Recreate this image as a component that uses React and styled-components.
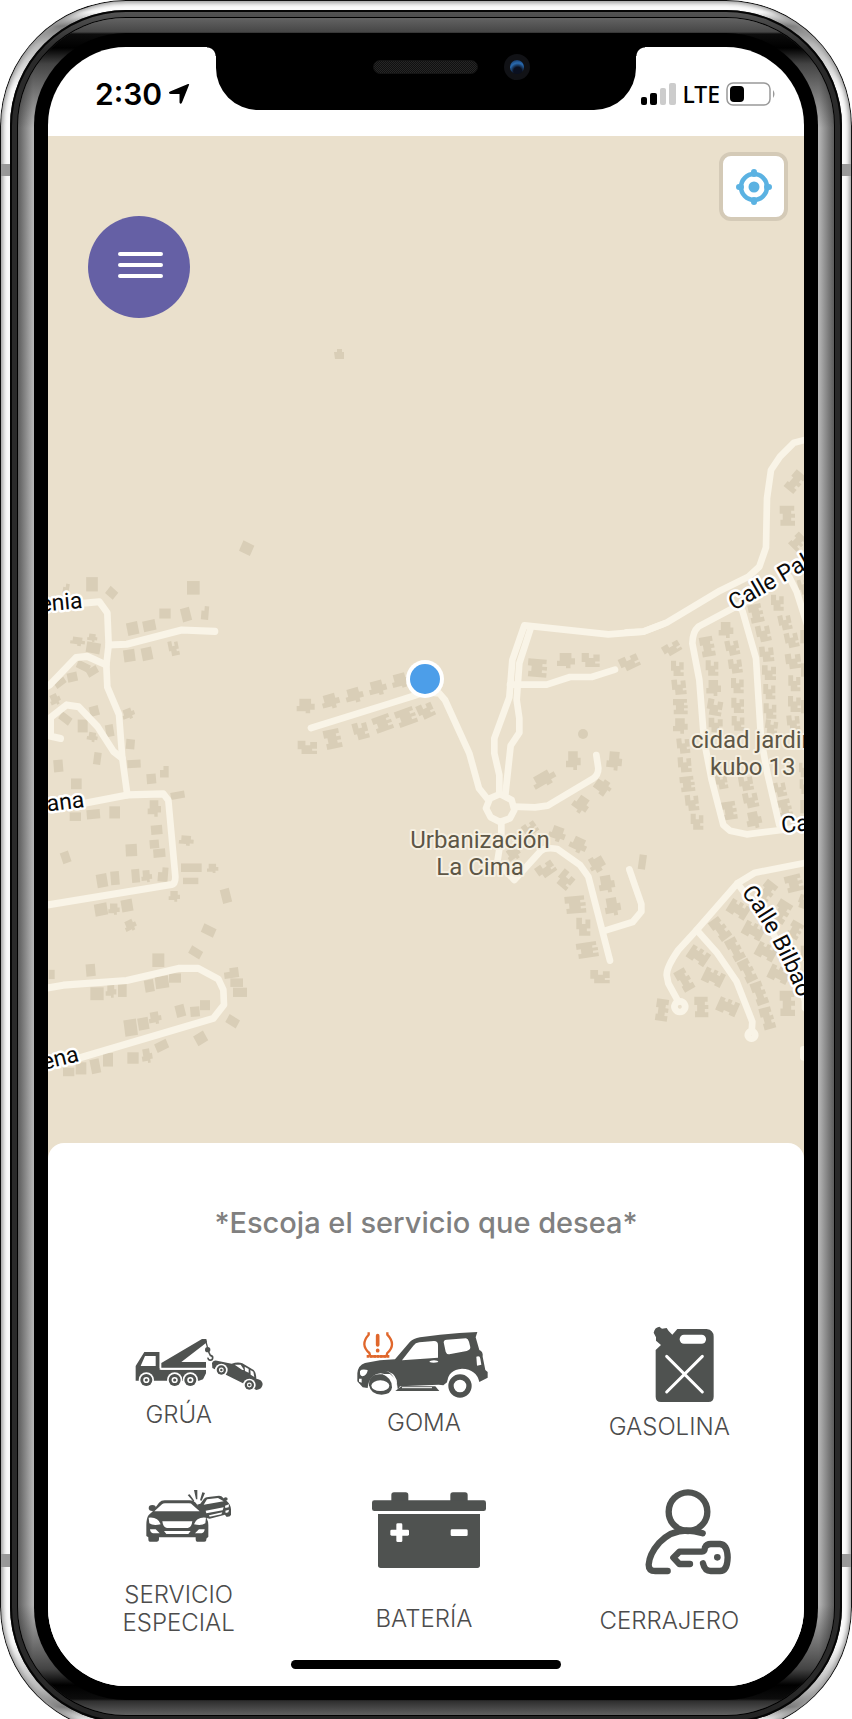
import React from "react";
import styled, { createGlobalStyle, css } from "styled-components";

const INK = "#4f5250";
const BLUE = "#5bb2e2";

const GlobalStyle = createGlobalStyle`
  * { box-sizing: border-box; }
  html, body { margin: 0; background: #fff; }
  body { font-family: Inter, "Liberation Sans", sans-serif; }
  button { font: inherit; color: inherit; border: 0; padding: 0; background: none; cursor: pointer; }
`;

/* ---------- device shell ---------- */

const Page = styled.div`
  min-height: 100vh;
  display: flex;
  flex-direction: column;
  overflow: clip;
`;

const SteelRing = styled.div`
  flex: 1;
  display: flex;
  margin-bottom: -14px;
  padding: 10px;
  border-radius: 126px;
  background:
    linear-gradient(
      to bottom,
      transparent 164px, #989898 164px, #989898 176px, transparent 176px,
      transparent calc(100% - 179px), #989898 calc(100% - 179px),
      #989898 calc(100% - 166px), transparent calc(100% - 166px)
    ),
    linear-gradient(
      to bottom,
      transparent 12px, rgba(40, 40, 40, 0.6) 26px, rgba(120, 120, 120, 0.5) 44px, transparent 90px,
      transparent calc(100% - 90px), rgba(120, 120, 120, 0.5) calc(100% - 44px),
      rgba(40, 40, 40, 0.6) calc(100% - 26px), transparent calc(100% - 12px)
    ),
    #fafafa;
  box-shadow: inset 0 0 0 1px #111, inset 0 0 4px 3px #9a9a9a;
`;

const DarkRing = styled.div`
  flex: 1;
  display: flex;
  padding: 8px;
  border-radius: 116px;
  background: linear-gradient(to bottom, #555 0, #2a2a2a 40px, #2a2a2a calc(100% - 40px), #222 100%);
  box-shadow: inset 0 0 0 2px #050505;
`;

const RimRing = styled.div`
  flex: 1;
  display: flex;
  padding: 15px 16px;
  border-radius: 108px;
  background:
    linear-gradient(
      to bottom,
      #636363 0, #464646 14px, #0c0c0c 16px, #000 30px, rgba(20, 20, 20, 0.7) 46px, transparent 110px,
      transparent calc(100% - 110px), rgba(20, 20, 20, 0.7) calc(100% - 46px), #000 calc(100% - 30px),
      #0c0c0c calc(100% - 16px), #2e2e2e calc(100% - 14px), #606060 100%
    ),
    linear-gradient(to right, #5c5c5c 0, #b4b4b4 15px, #b4b4b4 calc(100% - 15px), #5c5c5c 100%);
  box-shadow: 0 0 0 1px #000;
`;

const BlackRing = styled.div`
  flex: 1;
  display: flex;
  padding: 14px;
  border-radius: 92px;
  background: #000;
`;

const Screen = styled.main`
  flex: 1;
  min-width: 0;
  display: flex;
  flex-direction: column;
  border-radius: 78px;
  overflow: hidden;
  background: #fff;
`;

/* ---------- status bar ---------- */

const StatusBar = styled.header`
  display: grid;
  grid-template-columns: minmax(0, 168fr) minmax(0, 420fr) minmax(0, 168fr);
  height: 89px;
  flex: none;
`;

const StatusSide = styled.div`
  display: flex;
  align-items: center;
  justify-content: ${(p) => (p.$end ? "flex-end" : "flex-start")};
  gap: 6px;
  height: 28px;
  margin-top: 33px;
  padding: ${(p) => (p.$end ? "0 28px 0 0" : "0 0 0 47px")};
`;

const Time = styled.time`
  font-size: 30px;
  line-height: 28px;
  font-weight: 600;
  color: #000;
`;

const Network = styled.span`
  font-family: "Noto Sans", sans-serif;
  font-size: 23px;
  line-height: 28px;
  font-weight: 500;
  color: #000;
`;

const Notch = styled.div`
  position: relative;
  height: 63px;
  padding: 7px 0 0 157px;
  display: flex;
  align-items: flex-start;
  gap: 26px;
  background: #000;
  border-radius: 0 0 42px 42px;

  &::before,
  &::after {
    content: "";
    position: absolute;
    top: 0;
    width: 9px;
    height: 9px;
  }
  &::before {
    right: 100%;
    background: radial-gradient(circle at 0 100%, transparent 8px, #000 9px);
  }
  &::after {
    left: 100%;
    background: radial-gradient(circle at 100% 100%, transparent 8px, #000 9px);
  }
`;

const Speaker = styled.div`
  width: 105px;
  height: 14px;
  margin-top: 6px;
  border-radius: 7px;
  border: 1px solid #141414;
  background: repeating-conic-gradient(#262626 0 25%, #101010 0 50%) 0 0 / 2px 2px;
`;

const Camera = styled.div`
  width: 26px;
  height: 26px;
  border-radius: 50%;
  border: 6px solid #111216;
  background: radial-gradient(circle at 55% 80%, #0a1020 0 30%, #2a6bb0 60%, #12305a 90%);
`;

/* ---------- map ---------- */

const MapPanel = styled.section`
  position: relative;
  flex: 1;
  min-height: 500px;
  background: #eae0cc;
`;

const MapCanvas = styled.svg`
  position: absolute;
  inset: 0;
  width: 100%;
  height: 100%;
  font-family: Roboto, sans-serif;
`;

const mapButton = css`
  position: absolute;
  display: flex;
  align-items: center;
  justify-content: center;
`;

const MenuButton = styled.button`
  ${mapButton}
  top: 80px;
  left: 40px;
  width: 102px;
  height: 102px;
  border-radius: 50%;
  background: #6560a5;
`;

const LocateButton = styled.button`
  ${mapButton}
  top: 16px;
  right: 16px;
  width: 69px;
  height: 69px;
  border: 4px solid #d4cab7;
  border-radius: 12px;
  background: #fff;
`;

/* ---------- services sheet ---------- */

const Sheet = styled.section`
  position: relative;
  flex: none;
  display: flex;
  flex-direction: column;
  align-items: center;
  margin-top: -17px;
  padding: 62px 0 17px;
  border-radius: 16px 16px 0 0;
  background: #fff;
`;

const Title = styled.h1`
  margin: 0;
  font-size: 29px;
  line-height: 36px;
  font-weight: 500;
  color: #808080;
`;

const ServiceGrid = styled.ul`
  align-self: stretch;
  display: grid;
  grid-template-columns: repeat(3, minmax(0, 1fr));
  row-gap: 37px;
  margin: 77px 0 0;
  padding: 0 12px 0 8px;
  list-style: none;
`;

const ServiceItem = styled.li`
  display: flex;
  justify-content: center;
  align-items: flex-start;
`;

const ServiceButton = styled.button`
  display: flex;
  flex-direction: column;
  align-items: center;
  width: 180px;
`;

const ServiceIcon = styled.svg`
  display: block;
  width: 180px;
`;

const ServiceLabel = styled.span`
  max-width: 150px;
  font-size: 24px;
  line-height: 28px;
  font-weight: 300;
  color: #4c4c4c;
`;

const HomeIndicator = styled.div`
  width: 270px;
  height: 9px;
  margin-top: 23px;
  border-radius: 5px;
  background: #000;
`;

/* ---------- map data: footprints are [cx, cy, w, h, angle, shape] ---------- */

const SHAPES = {
  r: "M-1-1H1V1H-1Z",
  n: "M-1-.3H-.2V-1H1V1H-1Z",
  t: "M-.7-1H.6V-.3H1V.5H.5V1H0V.7H-1V0H-.7Z",
  h: "M-1-1H-.2V-.3H.3V-.8H1V.2H.5V.5H1V1H-.6V.3H-1Z",
  e: "M-1-1H.9V-.5H.5V-.2H1V.2H.5V.5H1V1H-.9V.4H-.6V-.2H-1Z",
};

const WEST = [
  [620,51,36,32,25],[156,152,35,40],[215,176,30,26,40],[78,165,18,30,10,"n"],[460,162,38,38],
  [375,234,34,28],[438,237,28,38,-15],[495,232,22,38,5,"n"],[278,276,34,36,-12],[328,268,38,30,-12],
  [268,352,34,34,-8],[321,347,32,36,-12],[401,331,30,42,-12,"h"],[113,312,44,24,8,"t"],[157,302,30,22,8,"t"],
  [160,330,42,30,10],[130,382,40,22,25],[157,396,34,22,-30],[97,412,30,26,-12],[61,428,34,18,-35],
  [45,475,32,32,-25,"t"],[76,528,36,24,35],[163,507,28,28,-15],[128,549,30,36],[157,580,32,26,10,"t"],
  [209,562,24,34,-10],[172,640,22,34,8],[265,515,38,30,-20,"t"],[271,600,26,28,5],[282,655,40,22,-3],
  [55,661,28,34,-5],[109,711,32,30],[334,697,28,28,-5],[373,677,26,32,0,"n"],[413,743,42,20,-10],
  [106,803,34,24],[160,796,40,26,-5],[224,791,32,34],[343,780,40,46,0,"t"],[350,840,34,26,-5],
  [343,880,28,24,-5],[358,905,36,24,-5],[274,897,34,34,-3],[77,917,26,32,-20],[439,870,44,28,5,"t"],
  [454,946,62,24],[518,948,34,26,0,"t"],[452,983,46,18],[186,982,32,38,-10],[225,975,26,38,-5],
  [287,969,24,38,-5],[320,970,32,34,-5,"t"],[369,965,30,40,5,"n"],[403,1026,34,30,0,"t"],[558,1025,28,40,-15],
  [183,1063,38,34,-10],[222,1062,34,32,0,"t"],[261,1052,34,34,-10],[271,1108,36,32,-25,"t"],[506,1122,40,26,25],
  [467,1183,38,24,30],[355,1205,36,38],[152,1233,28,34,-5],[35,1245,18,26],[171,1299,40,36],
  [213,1292,32,36,0,"t"],[247,1290,26,36],[328,1277,28,34,-10],[366,1267,40,34,-8],[405,1255,36,26],
  [574,1241,44,28,-8,"n"],[590,1268,38,24],[600,1295,42,26],[495,1331,30,28],[465,1349,28,28,-5],
  [421,1347,28,34,-15],[345,1367,38,34,-10,"t"],[310,1383,32,34,-10],[272,1394,38,46,-8],[578,1376,36,26,30],
  [482,1424,34,32,-30],[365,1445,38,26,-25],[321,1473,32,40,-10,"t"],[279,1479,34,32],[204,1484,30,38],
  [166,1502,28,40,-12],[123,1508,32,34],[86,1518,34,24],
];

const CENTRE = [
  [77,318,54,44,0,"t"],[152,304,54,44,-15,"t"],[223,286,54,44,-15,"t"],[293,264,54,44,-15,"t"],[362,242,54,44,-15,"t"],
  [82,442,58,40,0,"h"],[158,417,50,58,-12,"e"],[242,392,44,52,-15,"h"],[308,370,56,48,-20,"e"],[378,351,60,50,-20,"e"],
  [437,332,48,46,-25,"h"],[772,204,58,54,5,"e"],[858,182,54,46,0,"t"],[932,180,54,42,0,"h"],[1048,187,58,42,-25,"h"],
  [880,482,44,56,0,"t"],[1003,483,46,56,5,"t"],[792,538,74,42,-30,"t"],[968,561,46,50,-55,"t"],[903,614,48,50,35,"t"],
  [750,685,42,38,-35,"h"],[700,762,42,38,-35,"t"],[832,702,50,44,20,"t"],[895,735,52,44,25,"t"],[950,792,48,48,60,"t"],
  [980,852,48,52,-10,"t"],[998,920,48,54,-10,"t"],[797,808,56,42,-35,"h"],[856,839,46,50,40,"h"],[886,914,62,52,-5,"e"],
  [910,980,42,54,0,"h"],[922,1050,64,46,-8,"e"],[960,1130,58,40,0,"h"],[1087,786,22,44,8],
];

const EAST = [
  [495,185,40,64,40,"e"],[472,287,46,60,0,"e"],[503,365,38,48,45,"e"],[125,685,54,36,-30,"h"],[142,745,38,46,0,"h"],
  [147,801,42,46,-6,"h"],[151,860,44,46,0,"e"],[151,918,44,46,0,"t"],[160,977,38,46,-6,"h"],[164,1034,40,46,-4,"h"],
  [172,1092,44,46,-6,"e"],[186,1148,40,48,-6,"h"],[201,1205,38,48,0,"h"],
  [232,680,42,60,-10,"e"],[246,744,38,46,0,"h"],[251,804,44,48,0,"t"],[254,862,46,48,10,"h"],[257,915,42,44,0,"h"],
  [275,1085,34,44,-10,"h"],[298,1172,44,54,-8,"e"],[288,630,44,48,0,"t"],[307,683,40,46,-12,"h"],[316,738,40,44,-8,"h"],
  [322,797,38,46,0,"h"],[323,856,38,46,0,"h"],[324,910,38,44,0,"h"],[348,1090,42,44,-10,"h"],[362,1140,44,46,-12,"h"],
  [372,1200,46,50,-12,"t"],[378,580,42,56,-12,"e"],[400,640,42,50,-12,"h"],[410,702,42,46,-6,"h"],[417,758,42,44,0,"h"],
  [418,815,36,46,0,"h"],[420,873,38,46,0,"h"],[424,920,38,40,8,"h"],[450,1108,36,44,-12,"h"],[465,1165,40,54,-12,"e"],
  [442,548,38,48,0,"h"],[465,607,38,46,-12,"h"],[485,660,40,46,-12,"h"],[490,723,46,46,-8,"h"],[493,790,36,48,0,"h"],
  [493,852,38,48,0,"h"],[490,908,38,46,-6,"h"],[520,500,30,46,-15,"h"],[522,650,22,40],[522,750,18,40],[522,860,18,40],
  [520,1050,26,44,0,"h"],[522,1100,26,44,0,"h"],[522,1160,22,40],
];

const SOUTH_EAST = [
  [492,310,52,50,-14,"e"],[410,335,42,66,38,"e"],[325,388,46,62,-58,"e"],[455,395,46,66,32,"e"],[270,447,40,70,-36,"e"],
  [205,527,46,62,-56,"e"],[370,452,46,62,-62,"e"],[315,508,38,70,-28,"e"],[163,600,38,68,-30,"e"],[250,592,46,62,-64,"e"],
  [408,515,46,60,-62,"e"],[352,572,38,70,-26,"e"],[447,583,46,62,-64,"e"],[388,640,38,70,-20,"e"],[96,690,38,66,8,"e"],
  [214,681,42,62,0,"e"],[293,680,46,62,-66,"e"],[412,715,38,66,-15,"e"],[472,670,46,76,0,"e"],[495,450,40,50,30,"e"],
  [520,365,30,40,20,"h"],[522,520,20,46],
];

const DISTRICTS = [
  {
    at: [40, 530],
    sy: 0.357,
    buildings: WEST,
    roads: [
      "M120 206L178 201 202 232 206 322 199 378 202 440 237 517 247 640 262 742",
      "M206 322L260 320 425 280 525 284",
      "M10 445L30 433 108 357 142 354 199 378",
      "M62 584L32 578V525L80 490 116 495 172 550 220 620 247 640",
      "M130 766L262 742 370 739 385 757 406 970Q407 990 395 993L10 1052",
      "M10 1285L70 1275 260 1262 415 1228H475L535 1258 550 1288 552 1330 520 1368 110 1481",
    ],
  },
  {
    at: [280, 600],
    buildings: CENTRE,
    roads: [
      "M93 384L330 310 400 288 435 276 478 280 495 300 568 460 597 565 625 600",
      "M660 582L658 582V525L643 460V415L688 292 697 180 733 76 985 103 1090 95 1150 72",
      "M676 585L692 437 718 398V355L710 300 718 190 752 85",
      "M690 254H800L870 231H935L1005 209",
      "M702 620L765 622 803 617 940 535Q955 525 955 505L949 465",
      "M664 665V710L652 785 703 840 780 755Q795 740 832 747L900 795 925 830 990 1082",
      "M660 582L695 600 703 630 690 655 660 666 632 652 618 625 630 595Z",
      "M975 992L1058 966 1084 935V912L1048 808",
    ],
  },
  {
    at: [630, 420],
    buildings: EAST,
    roads: [
      "M-10 637L40 635 110 608 270 512 355 470 388 440 408 382 411 235 423 150 450 110 492 68 540 56",
      "M355 540L205 620Q188 635 187 670L208 780 222 960 245 1080 280 1215 300 1232 350 1243 455 1230 540 1218",
      "M330 560L338 575 378 715 393 955 412 1060 448 1215",
      "M478 472L500 515 530 610",
    ],
  },
  {
    at: [630, 780],
    buildings: SOUTH_EAST,
    roads: [
      "M540 246L375 278 322 310 200 450 145 510Q110 560 110 585L115 610 145 665",
      "M322 310L420 440 530 670",
      "M200 450L262 520 320 605 367 725 365 755",
      "M525 660V685M520 808V832",
      "M150 664A16 16 0 1 1 149 664Z",
      "M365 754A11 11 0 1 1 364 754Z",
    ],
  },
];

function District({ at, sy = 1 / 3, buildings, roads }) {
  return (
    <g transform={`translate(${at[0]} ${at[1]}) scale(${1 / 3} ${sy})`}>
      <g fill="#d9ceb7">
        {buildings.map(([x, y, w, h, a = 0, s = "r"], i) => (
          <path key={i} d={SHAPES[s]} transform={`translate(${x} ${y}) rotate(${a}) scale(${w / 2} ${h / 2})`} />
        ))}
      </g>
      <g fill="none" stroke="#f9f4e7" strokeWidth="20" strokeLinecap="round" strokeLinejoin="round">
        {roads.map((d) => (
          <path key={d} d={d} />
        ))}
      </g>
    </g>
  );
}

const StreetName = styled.text`
  font-size: ${(p) => p.$size || 23}px;
  fill: #0a0a0a;
  stroke: #fff;
  stroke-width: ${(p) => (p.$size ? 15 : 5)}px;
  stroke-linejoin: round;
  paint-order: stroke;
`;

const AreaName = styled.text`
  font-size: 24px;
  fill: #5d5646;
  stroke: #f6f0e2;
  stroke-width: 4px;
  stroke-linejoin: round;
  paint-order: stroke;
`;

function CityMap() {
  return (
    <MapCanvas viewBox="48 136 756 1024" preserveAspectRatio="xMidYMid slice" role="img" aria-label="Mapa">
      <path d="M334 352h3v-3h5v3h2v7h-9z" fill="#d9ceb7" />
      <circle cx="583" cy="734" r="5" fill="#d9ceb7" />
      {DISTRICTS.map((d) => (
        <District key={d.at.join()} {...d} />
      ))}
      <StreetName textAnchor="end" transform="translate(83 608) rotate(-5)">enia</StreetName>
      <StreetName textAnchor="end" transform="translate(85 807) rotate(-7)">ana</StreetName>
      <StreetName textAnchor="end" transform="translate(80 1061) rotate(-14)">ena</StreetName>
      <StreetName transform="translate(734 611) rotate(-30)">Calle Pal</StreetName>
      <StreetName transform="translate(782 833) rotate(-6)">Ca</StreetName>
      <g transform={`translate(630 780) scale(${1 / 3})`}>
        <path id="bilbao" d="M333 338Q422 448 508 660" fill="none" />
        <StreetName $size={69}>
          <textPath href="#bilbao">Calle Bilbao</textPath>
        </StreetName>
      </g>
      <AreaName x="480" y="848" textAnchor="middle">Urbanización</AreaName>
      <AreaName x="480" y="875" textAnchor="middle">La Cima</AreaName>
      <AreaName x="691" y="748">cidad jardin</AreaName>
      <AreaName x="710" y="775">kubo 13</AreaName>
      <circle cx="425" cy="679" r="19" fill="#fff" />
      <circle cx="425" cy="679" r="15" fill="#4c9ee9" />
    </MapCanvas>
  );
}

/* ---------- service drawings ---------- */

const Wheel = ({ x, y, r }) => (
  <>
    <circle cx={x} cy={y} r={r + 5} fill="#fff" />
    <circle cx={x} cy={y} r={r} />
    <circle cx={x} cy={y} r={r * 0.52} fill="#fff" />
    <circle cx={x} cy={y} r={r * 0.26} />
  </>
);

const TowTruck = () => (
  <>
    <path d="M104 126H150V179H289V190L280 208 268 212H78V168Z" />
    <path d="M93 168L106 138H138V168Z" fill="#fff" />
    <path d="M150 174H289V179H154V126H150Z" fill="#fff" />
    <path d="M155 159L277 87H290L292 97 215 156H289V173H155Z" />
    <Wheel x={110} y={210} r={18} />
    <Wheel x={195} y={210} r={18} />
    <Wheel x={242} y={210} r={18} />
    <path d="M288 92L296 122" fill="none" stroke={INK} strokeWidth="4" />
    <circle cx="294" cy="119" r="8" />
    <path d="M297 126L302 136Q310 138 309 144A7 7 0 0 1 295 143" fill="none" stroke={INK} strokeWidth="5" />
    <path d="M307 160Q310 150 322 152L366 161Q385 155 398 160L432 180Q439 186 440 206 458 209 459 222 458 238 440 240L308 174Z" />
    <path d="M375 164L393 164 403 179 398 180ZM405 170L417 177V188L406 183ZM422 180L431 185 434 201 423 194Z" fill="#fff" />
    <Wheel x={335} y={180} r={14} />
    <Wheel x={419} y={225} r={14} />
  </>
);

const FlatTyreCar = () => (
  <>
    <path d="M82 190Q84 166 105 159 150 149 195 148L240 95Q250 86 270 82L330 74Q390 68 442 66L437 82 448 120Q460 125 458 140L466 180 473 186V203L448 216Q440 178 396 176 354 180 352 216L340 226 326 224 210 229 203 240Q200 195 152 190 118 192 113 234L98 232 82 214Z" />
    <path d="M160 181Q195 186 203 240L200 210Q192 186 160 181Z" fill="#fff" />
    <path d="M216 151L250 107Q256 98 268 97L312 93Q324 93 324 105V143ZM341 97Q341 90 350 89L408 85Q414 86 417 95L421 112Q421 120 410 123L358 133Q350 134 347 125ZM298 156Q300 151 312 151 324 151 325 156 310 160 298 156ZM439 140Q450 136 451 146L454 164 441 167ZM90 183Q95 176 113 180 112 195 98 199 90 198 90 190ZM87 206H95V218L87 215Z" fill="#fff" />
    <path d="M158 193Q116 188 117 226 122 254 155 254 184 254 186 232 186 204 158 193Z" />
    <ellipse cx="151" cy="227" rx="27" ry="16" fill="#fff" />
    <path d="M158 192Q192 204 188 236L203 240 196 206 180 192Z" fill="#fff" />
    <path d="M196 243L214 229H316L328 243Z" />
    <path d="M216 233H306" stroke="#fff" strokeWidth="3" />
    <circle cx="390" cy="228" r="40" fill="#fff" />
    <circle cx="390" cy="228" r="27" fill="none" stroke={INK} strokeWidth="16" />
    <path d="M116 67V74Q89 104 118 129L121 139H169L172 129Q200 104 172 74V67" fill="none" stroke="#e0672c" strokeWidth="7" />
    <path d="M110 139H178" stroke="#e0672c" strokeWidth="8" strokeDasharray="8 2" />
    <path d="M143 77V105M143 121V122" stroke="#e0672c" strokeWidth="11" strokeLinecap="round" />
  </>
);

const FuelCan = () => (
  <>
    <path d="M247 104L262 87H350Q371 90 371 110V290Q371 306 355 306H213Q197 306 197 290V150L213 135 198 122V112L191 98Q194 82 208 80L216 86 230 84 236 93Z" />
    <rect x="269" y="104" width="79" height="27" rx="13" fill="#fff" />
    <path d="M230 169L337 276M337 169L230 276" stroke="#fff" strokeWidth="9" strokeLinecap="round" />
  </>
);

const CrashedCars = () => (
  <>
    <path d="M262 104L272 101 283 86Q287 82 296 81L328 77Q336 77 341 84L352 94Q363 104 364 118V134Q362 142 350 140L346 134 300 146 282 142Z" />
    <path d="M282 104L292 88 325 84 342 94ZM288 122L342 112 339 121 290 130ZM298 136L338 127 335 133 300 140ZM346 107L358 103 357 112 347 114ZM347 122L358 119 356 127 348 129Z" fill="#fff" />
    <ellipse cx="348" cy="87" rx="6" ry="5" />
    <path d="M234 75L240 73 254 92 250 94ZM253 60L263 60 263 88 259 88ZM278 67L286 69 276 92 271 91Z" />
    <path d="M117 135L128 125 148 98Q155 91 165 91H240Q252 91 258 98L278 126Q296 145 296 165V200L290 206V210Q290 215 284 215H262Q258 215 258 208V202H148V208Q148 215 142 215H120Q116 215 116 208V202L110 198V165Q110 145 117 135Z" />
    <ellipse cx="128" cy="114" rx="11" ry="9" />
    <ellipse cx="278" cy="114" rx="11" ry="8" />
    <path d="M134 124L157 103Q160 100 166 100H238Q245 100 248 104L270 124ZM117 143Q145 140 153 163 130 168 119 160ZM289 143Q261 140 253 163 276 168 287 160ZM158 154H248Q246 172 234 174H172Q160 172 158 154ZM163 183H243L236 192H170ZM121 178H138L150 190H130Q122 188 121 178ZM285 178H268L256 190H276Q284 188 285 178Z" fill="#fff" />
  </>
);

const Battery = () => (
  <>
    <path d="M184 95V75Q184 67 192 67H227Q235 67 235 75V95ZM361 95V75Q361 67 369 67H405Q413 67 413 75V95Z" />
    <rect x="126" y="91" width="342" height="32" rx="7" />
    <path d="M144 132H450V286Q450 294 442 294H152Q144 294 144 286Z" />
    <g fill="#fff">
      <rect x="181" y="179" width="56" height="18" rx="4" />
      <rect x="199" y="160" width="18" height="56" rx="4" />
      <rect x="362" y="178" width="51" height="20" rx="4" />
    </g>
  </>
);

const Locksmith = () => (
  <>
    <g fill="none" stroke={INK} strokeWidth="19" strokeLinecap="round" strokeLinejoin="round">
      <circle cx="1074" cy="125" r="58" />
      <path d="M1118 190Q1040 164 988 218 958 252 956 284 956 303 976 303H1013" />
      <path d="M1080 282H1048L1030 263 1048 245H1116Q1124 245 1125 232 1130 222 1142 222H1170Q1192 224 1193 262 1192 303 1170 303H1142Q1124 303 1119 280" />
    </g>
    <circle cx="1162" cy="262" r="10" />
  </>
);

/* Box heights are in pixels; the drawings use three units to a pixel. */
const SERVICES = [
  { name: "GRÚA", Art: TowTruck, x: -62, y: 24, height: 83 },
  { name: "GOMA", Art: FlatTyreCar, x: 12, y: 24, height: 91 },
  { name: "GASOLINA", Art: FuelCan, x: -33, y: 54, height: 95 },
  { name: "SERVICIO ESPECIAL", Art: CrashedCars, x: -62, y: 24, height: 103 },
  { name: "BATERÍA", Art: Battery, x: 12, y: 24, height: 127 },
  { name: "CERRAJERO", Art: Locksmith, x: 747, y: 24, height: 129 },
];

export default function App() {
  return (
    <Page>
      <GlobalStyle />
      <SteelRing>
        <DarkRing>
          <RimRing>
            <BlackRing>
              <Screen>
                <StatusBar>
                  <StatusSide>
                    <Time>2:30</Time>
                    <svg width="22" height="22" viewBox="0 0 22 22" aria-hidden="true">
                      <path d="M20 1Q21.500 .5 21 2L14 19.500Q12.500 22 11.500 19.500V11H2.500Q-.5 10 2 8.500Z" />
                    </svg>
                  </StatusSide>
                  <Notch>
                    <Speaker />
                    <Camera />
                  </Notch>
                  <StatusSide $end>
                    <svg width="35" height="22" viewBox="0 0 35 22" aria-hidden="true">
                      <rect x="0" y="14" width="6" height="8" rx="2" />
                      <rect x="9" y="10" width="7" height="12" rx="2" />
                      <rect x="19" y="5" width="6" height="17" rx="2" fill="#ccc" />
                      <rect x="28" y="0" width="7" height="22" rx="2" fill="#ccc" />
                    </svg>
                    <Network>LTE</Network>
                    <svg width="50" height="24" viewBox="0 0 50 24" aria-hidden="true">
                      <rect x="1" y="1" width="43" height="22" rx="6" fill="none" stroke="#999" strokeWidth="1.500" />
                      <rect x="4" y="4" width="14" height="16" rx="4" />
                      <path d="M47 8Q50 12 47 16Z" fill="#999" />
                    </svg>
                  </StatusSide>
                </StatusBar>

                <MapPanel>
                  <CityMap />
                  <MenuButton aria-label="Menú">
                    <svg width="50" height="32" viewBox="0 0 50 32" aria-hidden="true">
                      <path d="M6 3H47M6 14H47M6 25H47" stroke="#fff" strokeWidth="4" strokeLinecap="round" />
                    </svg>
                  </MenuButton>
                  <LocateButton aria-label="Mi ubicación">
                    <svg width="36" height="36" viewBox="0 0 36 36" aria-hidden="true">
                      <circle cx="18" cy="18" r="13" fill="none" stroke={BLUE} strokeWidth="4.500" />
                      <circle cx="18" cy="18" r="5.500" fill={BLUE} />
                      <path d="M18 3V5M18 31V33M3 18H5M31 18H33" stroke={BLUE} strokeWidth="6" strokeLinecap="round" />
                    </svg>
                  </LocateButton>
                </MapPanel>

                <Sheet>
                  <Title>*Escoja el servicio que desea*</Title>
                  <ServiceGrid>
                    {SERVICES.map(({ name, Art, x, y, height }) => (
                      <ServiceItem key={name}>
                        <ServiceButton>
                          <ServiceIcon
                            height={height}
                            viewBox={`${x} ${y} 540 ${height * 3}`}
                            fill={INK}
                            aria-hidden="true"
                          >
                            <Art />
                          </ServiceIcon>
                          <ServiceLabel>{name}</ServiceLabel>
                        </ServiceButton>
                      </ServiceItem>
                    ))}
                  </ServiceGrid>
                  <HomeIndicator />
                </Sheet>
              </Screen>
            </BlackRing>
          </RimRing>
        </DarkRing>
      </SteelRing>
    </Page>
  );
}
